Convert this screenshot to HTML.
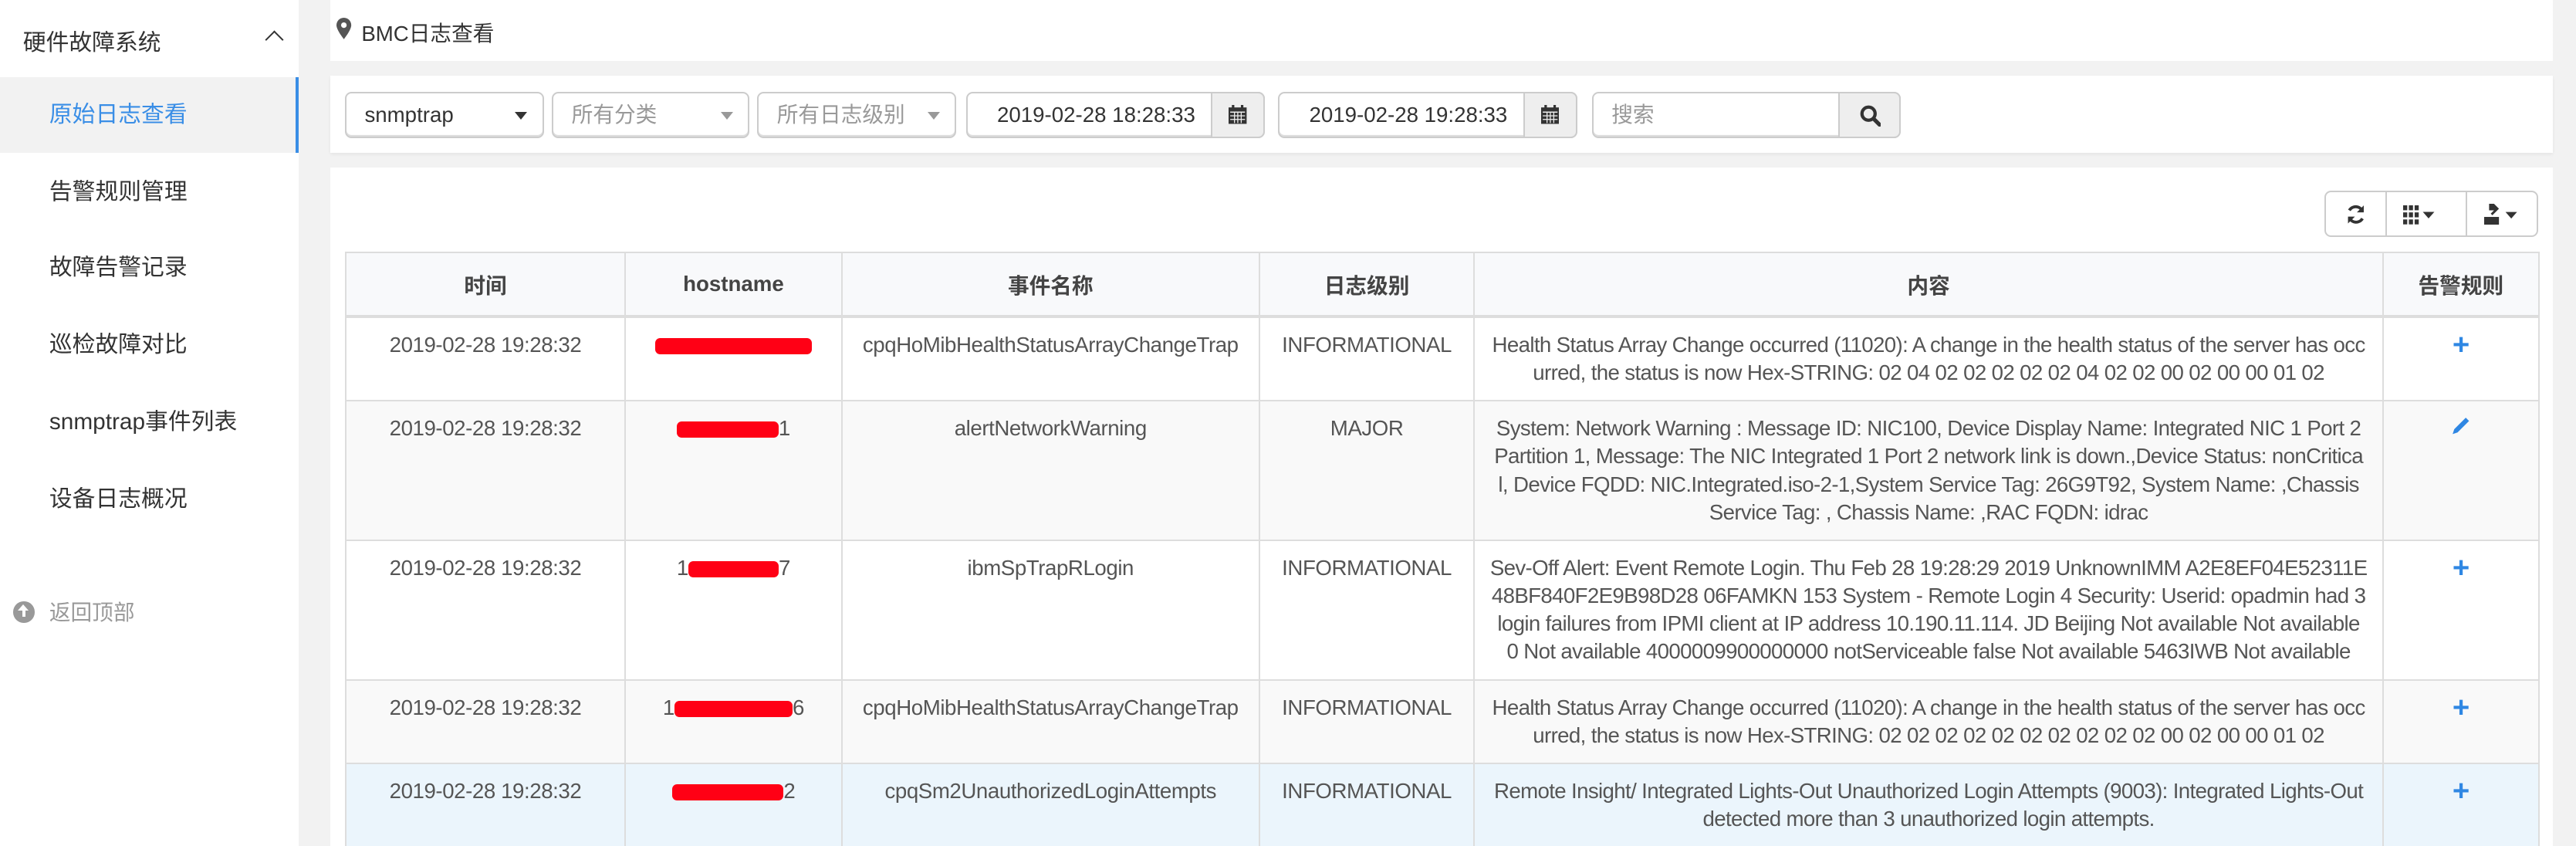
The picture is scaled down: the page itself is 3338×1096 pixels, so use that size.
<!DOCTYPE html>
<html><head><meta charset="utf-8"><style>
*{box-sizing:border-box;margin:0;padding:0}
html,body{width:3338px;height:1096px;overflow:hidden;background:#f2f2f2}
#root{zoom:2.1288;width:1568px;height:515px;position:relative;overflow:hidden;font-family:"Liberation Sans","Noto Sans CJK SC",sans-serif;color:#333;font-size:13px}
.side{position:absolute;left:0;top:0;width:182px;height:515px;background:#fff}
.side .t{position:absolute;left:14px;top:14px;font-size:14px;color:#333}
.side .chev{position:absolute;left:163px;top:20px;width:8px;height:8px;border-left:1.3px solid #333;border-top:1.3px solid #333;transform:rotate(45deg)}
.it{position:absolute;left:0;width:182px;height:46px;line-height:46px;padding-left:30px;font-size:14px;color:#333}
.it.act{background:#f2f2f2;color:#3a8ee6;border-right:2px solid #3a8ee6}
.back{position:absolute;left:8px;top:362px;font-size:13px;color:#999}
.back i{display:inline-block;width:13px;height:13px;border-radius:50%;background:#999;vertical-align:-2px;margin-right:9px;position:relative}
.back i:before{content:"";position:absolute;left:3px;top:2px;border-left:3.5px solid transparent;border-right:3.5px solid transparent;border-bottom:4px solid #fff}
.back i:after{content:"";position:absolute;left:5.5px;top:5.5px;width:2px;height:4px;background:#fff}
.panel{position:absolute;left:201px;width:1353px;background:#fff}
.hdr{top:0;height:37px}
.hdr span{position:absolute;left:19px;top:10px;font-size:13px;color:#333}
.pin{position:absolute;left:4px;top:11px}
.flt{top:46px;height:47px;box-shadow:0 1px 2px rgba(0,0,0,.06)}
.box{position:absolute;top:10px;height:28px;border:1px solid #ccc;border-radius:4px;background:#fff;line-height:26px;font-size:13px;padding-left:11px;box-shadow:inset 0 -1px 0 #ddd}
.box .car{position:absolute;right:9px;top:11px;border-left:4px solid transparent;border-right:4px solid transparent;border-top:5px solid #333}
.ph{color:#999}.ph .car{border-top-color:#999}
.add{position:absolute;top:-1px;right:-1px;height:28px;background:#eee;border:1px solid #ccc;border-radius:0 4px 4px 0}
.tbl{top:102px;height:420px}
.tb{position:absolute;top:14px;height:28px;border:1px solid #ccc;background:#fff}
table{position:absolute;left:9px;top:51px;border-collapse:collapse;table-layout:fixed;width:1335px;font-size:13px;color:#555}
th{background:#f8f9fb;height:39px;border:1px solid #ddd;border-bottom:2px solid #ddd;font-weight:bold;color:#444;text-align:center;vertical-align:middle}
td{border:1px solid #ddd;padding:8px;line-height:17px;text-align:center;vertical-align:top;word-break:break-all;letter-spacing:-0.2px}
td.c{letter-spacing:-0.3px;padding:8px 9px}
tr.s td{background:#f9f9f9}
tr.h td{background:#ebf5fc}
.red{display:inline-block;height:10px;background:#ff0015;border-radius:3px;vertical-align:middle}
.plus{color:#2f87e3;font-weight:bold;font-size:18px;line-height:17px}
</style></head><body><div id="root">
<div class="side">
<div class="t">硬件故障系统</div><div class="chev"></div>
<div class="it act" style="top:47px">原始日志查看</div>
<div class="it" style="top:94px">告警规则管理</div>
<div class="it" style="top:140px">故障告警记录</div>
<div class="it" style="top:187px">巡检故障对比</div>
<div class="it" style="top:234px">snmptrap事件列表</div>
<div class="it" style="top:281px">设备日志概况</div>
<div class="back"><i></i>返回顶部</div>
</div>
<div class="panel hdr"><svg class="pin" width="9" height="13" viewBox="0 0 9 13"><path d="M4.5 0C2 0 0 2 0 4.5 0 7.5 4.5 13 4.5 13S9 7.5 9 4.5C9 2 7 0 4.5 0z" fill="#555"/><circle cx="4.5" cy="4.5" r="1.7" fill="#fff"/></svg><span>BMC日志查看</span></div>
<div class="panel flt">
<div class="box" style="left:9px;width:121px">snmptrap<span class="car"></span></div>
<div class="box ph" style="left:135px;width:120px">所有分类<span class="car"></span></div>
<div class="box ph" style="left:260px;width:121px">所有日志级别<span class="car"></span></div>
<div class="box" style="left:387px;width:182px;padding-left:18px">2019-02-28 18:28:33<div class="add" style="width:33px"><svg width="11" height="12" viewBox="0 0 11 12" style="position:absolute;left:10px;top:7px"><rect x="0" y="1.5" width="11" height="10" fill="#333"/><rect x="2" y="0" width="1.5" height="3" fill="#333"/><rect x="7.5" y="0" width="1.5" height="3" fill="#333"/><g fill="#eee"><rect x="1" y="4" width="9" height=".7"/><rect x="1" y="6.3" width="9" height=".6"/><rect x="1" y="8.5" width="9" height=".6"/><rect x="3.3" y="4" width=".6" height="7"/><rect x="5.3" y="4" width=".6" height="7"/><rect x="7.4" y="4" width=".6" height="7"/></g></svg></div></div>
<div class="box" style="left:577px;width:182px;padding-left:18px">2019-02-28 19:28:33<div class="add" style="width:33px"><svg width="11" height="12" viewBox="0 0 11 12" style="position:absolute;left:10px;top:7px"><rect x="0" y="1.5" width="11" height="10" fill="#333"/><rect x="2" y="0" width="1.5" height="3" fill="#333"/><rect x="7.5" y="0" width="1.5" height="3" fill="#333"/><g fill="#eee"><rect x="1" y="4" width="9" height=".7"/><rect x="1" y="6.3" width="9" height=".6"/><rect x="1" y="8.5" width="9" height=".6"/><rect x="3.3" y="4" width=".6" height="7"/><rect x="5.3" y="4" width=".6" height="7"/><rect x="7.4" y="4" width=".6" height="7"/></g></svg></div></div>
<div class="box ph" style="left:768px;width:188px">搜索<div class="add" style="width:38px"><svg width="13" height="13" viewBox="0 0 13 13" style="position:absolute;left:12px;top:7px"><circle cx="5.3" cy="5.3" r="4" fill="none" stroke="#333" stroke-width="2"/><path d="M8.3 8.3L12 12" stroke="#333" stroke-width="2.4" stroke-linecap="round"/></svg></div></div>
</div>
<div class="panel tbl">
<div class="tb" style="left:1214px;width:38px;border-radius:4px 0 0 4px"><svg width="12" height="13" viewBox="0 0 12 13" style="position:absolute;left:12px;top:7px"><path d="M10 4.5A4.5 4.5 0 0 0 2 4" fill="none" stroke="#333" stroke-width="1.8"/><path d="M10.8 1v4.2H6.6z" fill="#333"/><path d="M2 8.5A4.5 4.5 0 0 0 10 9" fill="none" stroke="#333" stroke-width="1.8"/><path d="M1.2 12V7.8h4.2z" fill="#333"/></svg></div>
<div class="tb" style="left:1251px;width:50px"><svg width="24" height="12" viewBox="0 0 24 12" style="position:absolute;left:10px;top:8px"><g fill="#333"><rect x="0" y="0" width="2.5" height="3"/><rect x="3.5" y="0" width="2.5" height="3"/><rect x="7" y="0" width="2.5" height="3"/><rect x="0" y="4.3" width="2.5" height="3"/><rect x="3.5" y="4.3" width="2.5" height="3"/><rect x="7" y="4.3" width="2.5" height="3"/><rect x="0" y="8.6" width="2.5" height="3"/><rect x="3.5" y="8.6" width="2.5" height="3"/><rect x="7" y="8.6" width="2.5" height="3"/><path d="M12 4h7l-3.5 4z"/></g></svg></div>
<div class="tb" style="left:1300px;width:44px;border-radius:0 4px 4px 0"><svg width="24" height="13" viewBox="0 0 24 13" style="position:absolute;left:10px;top:7px"><g fill="#333"><rect x="0" y="8" width="9" height="5"/><path d="M3 0h3l3 3-4 4-1-1 2-2H3z"/><path d="M13 5h7l-3.5 4z"/></g></svg></div>
<table>
<colgroup><col style="width:170px"><col style="width:132px"><col style="width:254px"><col style="width:131px"><col style="width:553px"><col style="width:95px"></colgroup>
<tr><th>时间</th><th>hostname</th><th>事件名称</th><th>日志级别</th><th>内容</th><th>告警规则</th></tr>
<tr><td>2019-02-28 19:28:32</td><td><span class="red" style="width:95px"></span></td><td>cpqHoMibHealthStatusArrayChangeTrap</td><td>INFORMATIONAL</td><td class="c">Health Status Array Change occurred (11020): A change in the health status of the server has occurred, the status is now Hex-STRING: 02 04 02 02 02 02 02 04 02 02 00 02 00 00 01 02</td><td class="plus">+</td></tr>
<tr class="s"><td>2019-02-28 19:28:32</td><td><span class="red" style="width:62px"></span>1</td><td>alertNetworkWarning</td><td>MAJOR</td><td class="c">System: Network Warning : Message ID: NIC100, Device Display Name: Integrated NIC 1 Port 2 Partition 1, Message: The NIC Integrated 1 Port 2 network link is down.,Device Status: nonCritical, Device FQDD: NIC.Integrated.iso-2-1,System Service Tag: 26G9T92, System Name: ,Chassis Service Tag: , Chassis Name: ,RAC FQDN: idrac</td><td><svg width="12" height="12" viewBox="0 0 12 12"><path d="M9 1l2 2-7 7-3 1 1-3z" fill="#2f87e3"/></svg></td></tr>
<tr><td>2019-02-28 19:28:32</td><td>1<span class="red" style="width:55px"></span>7</td><td>ibmSpTrapRLogin</td><td>INFORMATIONAL</td><td class="c">Sev-Off Alert: Event Remote Login. Thu Feb 28 19:28:29 2019 UnknownIMM A2E8EF04E52311E48BF840F2E9B98D28 06FAMKN 153 System - Remote Login 4 Security: Userid: opadmin had 3 login failures from IPMI client at IP address 10.190.11.114. JD Beijing Not available Not available 0 Not available 4000009900000000 notServiceable false Not available 5463IWB Not available</td><td class="plus">+</td></tr>
<tr class="s"><td>2019-02-28 19:28:32</td><td>1<span class="red" style="width:72px"></span>6</td><td>cpqHoMibHealthStatusArrayChangeTrap</td><td>INFORMATIONAL</td><td class="c">Health Status Array Change occurred (11020): A change in the health status of the server has occurred, the status is now Hex-STRING: 02 02 02 02 02 02 02 02 02 02 00 02 00 00 01 02</td><td class="plus">+</td></tr>
<tr class="h"><td>2019-02-28 19:28:32</td><td><span class="red" style="width:68px"></span>2</td><td>cpqSm2UnauthorizedLoginAttempts</td><td>INFORMATIONAL</td><td class="c">Remote Insight/ Integrated Lights-Out Unauthorized Login Attempts (9003): Integrated Lights-Out detected more than 3 unauthorized login attempts.</td><td class="plus">+</td></tr>
</table>
</div>
</div></body></html>
